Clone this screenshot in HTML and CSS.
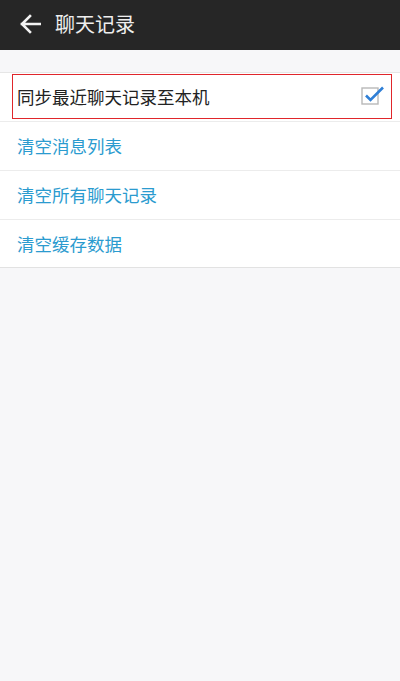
FILE: index.html
```html
<!DOCTYPE html>
<html lang="zh-CN">
<head>
    <meta charset="UTF-8">
    <meta name="viewport" content="width=device-width, initial-scale=1.0">
    <title>聊天记录</title>
    <link rel="stylesheet" href="styles.css">
</head>
<body>

    <div class="header">
        <svg class="back" width="22" height="20" viewBox="0 0 22 20">
            <path d="M21 10H3M11 2L3 10l8 8" fill="none" stroke="#f2f2f2" stroke-width="2.6" stroke-linecap="square"/>
        </svg>
        <span class="title">聊天记录</span>
    </div>

    <div class="list">
        <div class="row row-first">
            <div class="highlight">
                <span class="label">同步最近聊天记录至本机</span>
                <svg class="check" width="24" height="20" viewBox="0 0 24 20">
                    <rect x="1" y="3" width="16" height="16" fill="#fff" stroke="#b8b8b8" stroke-width="1.4"/>
                    <path d="M5 10.5l4.5 4.5L22 2.5" fill="none" stroke="#2f7fd6" stroke-width="2.6"/>
                </svg>
            </div>
        </div>
        <div class="row"><span class="action">清空消息列表</span></div>
        <div class="row"><span class="action">清空所有聊天记录</span></div>
        <div class="row row-last"><span class="action">清空缓存数据</span></div>
    </div>

</body>
</html>
```

FILE: styles.css
```css
body {
    font-family: "Noto Sans CJK SC", "Noto Sans", sans-serif;
    background-color: #f7f7f9;
    margin: 0;
    min-height: 100vh;
}
.header {
    height: 50px;
    background: #262626;
    display: flex;
    align-items: center;
}
.back {
    margin-left: 19px;
    margin-top: -2px;
}
.title {
    color: #eeeeee;
    font-size: 20px;
    margin-left: 14px;
    margin-top: -3px;
}
.list {
    margin-top: 22px;
    background: #fff;
    border-top: 1px solid #e6e6e6;
    border-bottom: 1px solid #e2e2e2;
}
.row {
    height: 48px;
    display: flex;
    align-items: center;
    padding-left: 17px;
    border-bottom: 1px solid #ececec;
}
.row-first {
    padding-left: 0;
    align-items: flex-start;
}
.row-last {
    height: 47px;
    border-bottom: none;
}
.highlight {
    box-sizing: border-box;
    margin: 1px 8px 0 12px;
    flex: 1;
    height: 45px;
    border: 1.5px solid #e0262b;
    display: flex;
    align-items: center;
    justify-content: space-between;
    padding-left: 4px;
    padding-right: 6px;
}
.label {
    font-size: 17.5px;
    color: #222;
}
.check {
    margin-top: -3px;
}
.action {
    font-size: 17.5px;
    color: #2b9bcf;
    margin-top: -1px;
}
```
